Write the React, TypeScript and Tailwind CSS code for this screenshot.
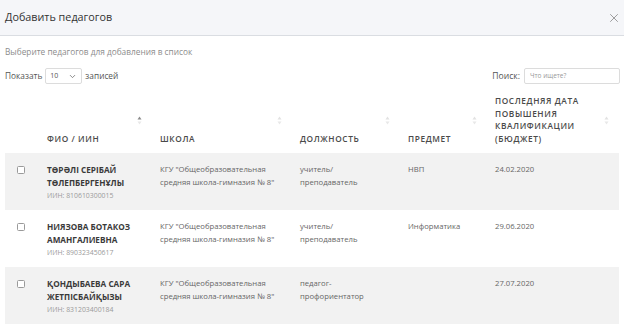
import { ChevronDown, X } from 'lucide-react';

type Teacher = {
  name: [string, string];
  iin: string;
  school: [string, string];
  position: [string, string];
  subject: string;
  date: string;
};

const teachers: Teacher[] = [
  {
    name: ['ТӨРӘЛІ СЕРІБАЙ', 'ТӨЛЕПБЕРГЕНҰЛЫ'],
    iin: '810610300015',
    school: ['КГУ "Общеобразовательная', 'средняя школа-гимназия № 8"'],
    position: ['учитель/', 'преподаватель'],
    subject: 'НВП',
    date: '24.02.2020',
  },
  {
    name: ['НИЯЗОВА БОТАКОЗ', 'АМАНГАЛИЕВНА'],
    iin: '890323450617',
    school: ['КГУ "Общеобразовательная', 'средняя школа-гимназия № 8"'],
    position: ['учитель/', 'преподаватель'],
    subject: 'Информатика',
    date: '29.06.2020',
  },
  {
    name: ['ҚОНДЫБАЕВА САРА', 'ЖЕТПІСБАЙҚЫЗЫ'],
    iin: '831203400184',
    school: ['КГУ "Общеобразовательная', 'средняя школа-гимназия № 8"'],
    position: ['педагог-', 'профориентатор'],
    subject: '',
    date: '27.07.2020',
  },
];

const cols = 'grid grid-cols-[35px_113px_140px_108px_87px_132px]';

function SortMark({ up }: { up?: boolean }) {
  return (
    <span className="absolute right-[11px] top-[26px] flex flex-col items-center leading-none">
      <svg width="5" height="9" viewBox="0 0 5 9" aria-hidden>
        <path d="M2.5 0.5 L4.5 3.5 L0.5 3.5 Z" fill={up ? '#8a8a8a' : '#e2e2e2'} />
        <path d="M2.5 8.5 L4.5 5.5 L0.5 5.5 Z" fill="#e8e8e8" />
      </svg>
    </span>
  );
}

function HeadCell({ lines, up, sort = true }: { lines: string[]; up?: boolean; sort?: boolean }) {
  return (
    <div className="relative flex flex-col justify-end pb-[8px] pl-[7px] pr-[18px]">
      {sort ? <SortMark up={up} /> : null}
      {lines.map((l) => (
        <div key={l} className="whitespace-nowrap text-[8.3px] font-semibold leading-[12.4px] tracking-[0.6px] text-[#4a4a4a]">
          {l}
        </div>
      ))}
    </div>
  );
}

export default function App() {
  return (
    <div className="h-[334px] w-[624px] overflow-hidden bg-white font-['Open_Sans',sans-serif]">
      <div className="flex h-[36px] items-center justify-between border-b border-[#dadde2] bg-[#f5f6f9] pl-[5px] pr-[3px]">
        <h1 className="text-[10.8px] font-medium text-[#333]">Добавить педагогов</h1>
        <X className="h-[14px] w-[14px] text-[#777]" strokeWidth={1.2} aria-hidden />
      </div>

      <p className="mt-[9px] pl-[5px] text-[8.3px] leading-[13px] text-[#8c8c8c]">
        Выберите педагогов для добавления в список
      </p>

      <div className="mt-[10px] flex items-center justify-between pl-[5px] pr-[4px]">
        <div className="flex items-center text-[8.3px] text-[#555]">
          <span>Показать</span>
          <span className="ml-[3px] flex h-[16px] w-[37px] items-center justify-between rounded-[2px] border border-[#dcdcdc] pl-[4px] pr-[4px] text-[7px] text-[#555]">
            10
            <ChevronDown className="h-[9px] w-[9px] text-[#666]" strokeWidth={2} aria-hidden />
          </span>
          <span className="ml-[3px]">записей</span>
        </div>
        <div className="flex items-center text-[8.6px] text-[#555]">
          <span>Поиск:</span>
          <span className="ml-[4px] flex h-[16px] w-[96px] items-center rounded-[2px] border border-[#dcdcdc] pl-[5px] text-[6.5px] text-[#999]">
            Что ищете?
          </span>
        </div>
      </div>

      <div className="mt-[6px] px-[5px]">
        <div className={`${cols} h-[63px]`}>
          <div />
          <HeadCell lines={['ФИО / ИИН']} up />
          <HeadCell lines={['ШКОЛА']} />
          <HeadCell lines={['ДОЛЖНОСТЬ']} />
          <HeadCell lines={['ПРЕДМЕТ']} />
          <HeadCell lines={['ПОСЛЕДНЯЯ ДАТА', 'ПОВЫШЕНИЯ', 'КВАЛИФИКАЦИИ', '(БЮДЖЕТ)']} />
        </div>

        {teachers.map((t, i) => (
          <div
            key={t.iin}
            className={`${cols} h-[57px] pt-[10px] text-[7.7px] leading-[13px] text-[#666] ${i % 2 === 0 ? 'bg-[#f2f2f2]' : 'bg-white'}`}
          >
            <div className="pl-[12px] pt-[3px]">
              <span className="block h-[8px] w-[8px] rounded-[1.5px] border border-[#9a9a9a] bg-white" />
            </div>
            <div className="pl-[7px]">
              <div className="whitespace-nowrap text-[8.2px] font-bold text-[#3a3a3a]">{t.name[0]}</div>
              <div className="whitespace-nowrap text-[8.2px] font-bold text-[#3a3a3a]">{t.name[1]}</div>
              <div className="text-[6.9px] leading-[13px] text-[#9a9a9a]">ИИН: {t.iin}</div>
            </div>
            <div className="pl-[7px]">
              <div>{t.school[0]}</div>
              <div>{t.school[1]}</div>
            </div>
            <div className="pl-[7px]">
              <div>{t.position[0]}</div>
              <div>{t.position[1]}</div>
            </div>
            <div className="pl-[7px]">{t.subject}</div>
            <div className="pl-[7px]">{t.date}</div>
          </div>
        ))}
      </div>
    </div>
  );
}
